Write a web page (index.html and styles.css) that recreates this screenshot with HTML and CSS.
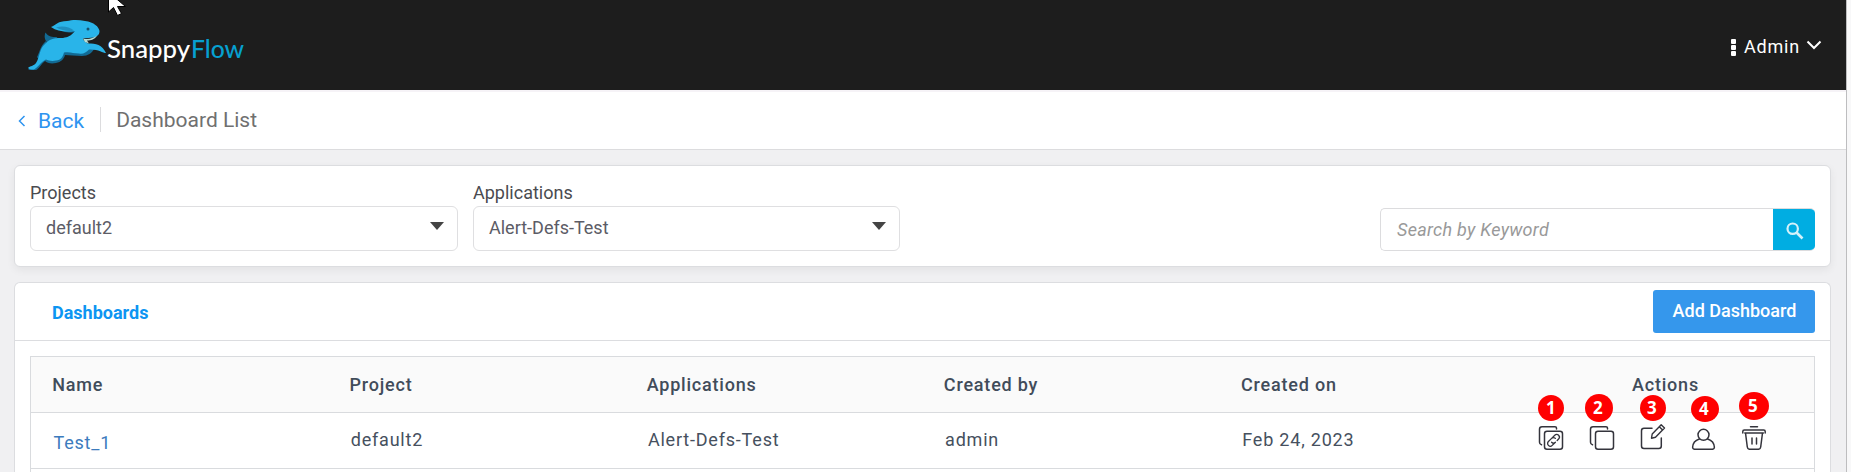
FILE: index.html
```html
<!DOCTYPE html>
<html lang="en">
<head>
<meta charset="utf-8">
<title>Dashboard List</title>
<link rel="stylesheet" href="styles.css">
</head>
<body>
<div class="page">
  <header class="topbar">
    <svg class="logo" width="222" height="56" viewBox="24 16 222 56">
      <path d="M45.500 32.500c3 4 6 5 12 4.500l-3 3-7 3c-3-3-3.500-7-2-10.500z" fill="#126a94"/>
      <path d="M46 41c-6 5-6 11-9 16l2 3 10-10z" fill="#126a94"/>
      <path d="M56 27c6 6 14 6 22 5l2-4-10-3z" fill="#126a94"/>
      <path d="M64 50c8 4 16 3 26-3l4 2c-2 4-6 7-12 7-7 0-12-1-17-1-1 4-4 7-9 8-5 1-9 0-11-2-4 3-6 8-9 9h-8l10-7z" fill="#126a94"/>
      <path d="M51 27c5-2 7-6 16-6 5-1.500 12-1.500 18 0 9 1 14 6 14.500 10 0 4-3 6-6 6.500L83 38.500c0 2 2 3 5 5 8 0 14 1 18 9.500-3 0-8-4-17-3.500-3 3-6 5-10 4-6 0-9-2-15-1-1 4-3 8-8 8-4 1-8 0-10-1-6 3-8 8-12 10-3 0-5-.500-6-1.500 2-2 6-2 8-5 4-6 3-14 9-19 5-6 11-6 18-6 5-1 8-2 12-7-9 1-17 1-24-4z" fill="#29b4e9"/>
      <path d="M56 27.500c6-2 13-1 18 3-6 1.500-12 0-18-3z" fill="#1e8fc0"/>
      <path d="M83 38.500c5 1.300 10 0 14-3-2 4-6 5-10 5l2 3-4-1.500z" fill="#b5dcd5"/>
      <circle cx="88" cy="29" r="1.500" fill="#15516f"/>
      <text class="wordmark" x="107" y="57.500" textLength="83" lengthAdjust="spacingAndGlyphs" fill="#fff">Snappy</text>
      <text class="wordmark" x="191" y="57.500" textLength="53" lengthAdjust="spacingAndGlyphs" fill="#06a0d0">Flow</text>
    </svg>
    <div class="account">
      <span class="dots"><i></i><i></i><i></i></span>
      <span>Admin</span>
      <svg class="chevron" width="16" height="10" viewBox="0 0 16 10"><path d="M1.500 1.500 8 8l6.500-6.500" fill="none" stroke="#fff" stroke-width="2"/></svg>
    </div>
    <svg class="cursor" width="18" height="16" viewBox="0 0 18 16"><path d="M.5-8v20l5-4.500 4 8 4-2-4-7h8z" fill="#fff" stroke="#000"/></svg>
  </header>
  <nav class="crumbs">
    <a class="back"><svg width="8" height="12" viewBox="0 0 8 12"><path d="M6.500 1 1.500 6l5 5" fill="none" stroke="#2e94f0" stroke-width="1.500"/></svg><span>Back</span></a>
    <h1>Dashboard List</h1>
  </nav>
  <main>
    <section class="card filters">
      <div class="field"><label>Projects</label><div class="select"><span>default2</span><svg width="14" height="8" viewBox="0 0 14 8"><path d="M0 0h14L7 8z" fill="#444"/></svg></div></div>
      <div class="field second"><label>Applications</label><div class="select"><span>Alert-Defs-Test</span><svg width="14" height="8" viewBox="0 0 14 8"><path d="M0 0h14L7 8z" fill="#444"/></svg></div></div>
      <div class="search">
        <span class="placeholder">Search by Keyword</span>
        <span class="go"><svg width="18" height="18" viewBox="0 0 18 18" fill="none" stroke="#d3f1fa"><circle cx="6.700" cy="6.700" r="5.200" stroke-width="2.200"/><path d="m10.500 10.500 6 6" stroke-width="2.600"/></svg></span>
      </div>
    </section>
    <section class="card list">
      <div class="list-head"><h2>Dashboards</h2><button class="add">Add Dashboard</button></div>
      <div class="table">
        <div class="row head"><span>Name</span><span>Project</span><span>Applications</span><span>Created by</span><span>Created on</span><span class="center">Actions</span></div>
        <div class="row body">
          <span class="name">Test_1</span><span>default2</span><span>Alert-Defs-Test</span><span>admin</span><span>Feb 24, 2023</span>
          <div class="actions">
            <svg class="icons" width="232" height="28" viewBox="1537 422 232 28" fill="none" stroke="#34343c" stroke-width="1.500" stroke-linecap="round" stroke-linejoin="round">
              <path d="M1556.500 429v-1q0-1.300-1.500-1.300h-13q-2.500 0-2.500 2.500v13q0 2 2 2.500"/>
              <rect x="1544.500" y="431.200" width="18" height="18" rx="2.500"/>
              <g transform="rotate(-45 1553.500 440.300)"><path d="M1553.500 443h-4.500a2.700 2.700 0 0 1 0-5.400h4.500a2.700 2.700 0 0 1 2.700 2.700M1553.500 437.600h4.500a2.700 2.700 0 0 1 0 5.400h-2M1550.800 440.300a2.700 2.700 0 0 0 2.700 2.700" stroke-width="1.300"/></g>
              <path d="M1607.500 429v-1q0-1.300-1.500-1.300h-13q-2.500 0-2.500 2.500v13q0 2 2 2.500"/>
              <rect x="1595.500" y="431.200" width="18" height="18" rx="2.500"/>
              <path d="M1652 428.300h-8q-2.500 0-2.500 2.500v15.200q0 2.500 2.500 2.500h14.800q2.500 0 2.500-2.500v-8"/>
              <path d="m1651.500 438.200.7-4.200 9-9.200 3.300 3.200-9 9.200zM1659.300 426.700l3.300 3.200" stroke-width="1.400"/>
              <circle cx="1703.500" cy="434.800" r="5.500"/>
              <path d="M1699.300 439c-4 1.300-6.500 4.500-6.700 8.300q0 2 2.200 2h17.400q2.200 0 2.200-2c-.2-3.800-2.700-7-6.700-8.300"/>
              <path d="M1742.800 433v-1.500q0-1.500 1.500-1.500h19.400q1.500 0 1.500 1.500v1.500M1750.500 426.700h7M1744.800 433h18.600M1745.500 433l1.800 14q.3 2.300 2.500 2.300h8.400q2.200 0 2.500-2.300l1.800-14M1752 438v6M1756.500 438v6"/>
            </svg>
            <b class="pin p1">1</b><b class="pin p2">2</b><b class="pin p3">3</b><b class="pin p4">4</b><b class="pin p5">5</b>
          </div>
        </div>
        <div class="row next"></div>
      </div>
    </section>
  </main>
</div>
</body>
</html>
```
FILE: styles.css
```css
* { box-sizing: border-box; }
body {
  margin: 0;
  height: 472px;
  overflow: hidden;
  background: #f8f8f9;
  font: 18px/20px Roboto, "Noto Sans", sans-serif;
  color: #4a4b50;
}
h1, h2 { margin: 0; }
.page {
  width: 1847px;
  height: 472px;
  overflow: hidden;
  background: #f0f0f2;
  border-right: 1px solid #bdbdbf;
}
.topbar {
  position: relative;
  height: 90px;
  display: flex;
  align-items: flex-start;
  justify-content: space-between;
  padding: 16px 24px 0;
  background: #1d1d1d;
}
.wordmark { font: 500 25px Lato, sans-serif; }
.account {
  display: flex;
  margin-top: 21px;
  color: #fff;
  letter-spacing: .8px;
}
.dots { display: grid; gap: 1px; width: 5px; margin: 2px 8px 0 0; align-content: start; }
.dots i { height: 5px; background: #fff; border-radius: 1px; }
.chevron { margin: 3px 0 0 6px; }
.cursor { position: absolute; left: 108px; top: 0; }
.crumbs {
  height: 60px;
  display: flex;
  align-items: flex-start;
  padding: 15px 18px 0;
  background: #fff;
  border-top: 2px solid #f6f3f7;
  border-bottom: 1px solid #dcdcde;
}
.back {
  display: flex;
  align-items: center;
  gap: 12px;
  height: 28px;
  padding-right: 16px;
  font-size: 21px;
  color: #2e94f0;
}
.crumbs h1 {
  height: 25px;
  padding-left: 15px;
  border-left: 1px solid #dcdcde;
  font-size: 21px;
  font-weight: 400;
  line-height: 26px;
  color: #707070;
}
main { padding: 15px 15px 0 14px; }
.card {
  background: #fff;
  border: 1px solid #dcdde0;
  border-radius: 6px;
}
.filters {
  height: 102px;
  display: flex;
  gap: 15px;
  padding: 17px 15px 0;
  margin-bottom: 15px;
  box-shadow: 0 3px 8px rgba(0, 0, 0, .06);
}
.field { width: 428px; }
.second { width: 427px; }
.field label { display: block; height: 23px; }
.select {
  height: 45px;
  display: flex;
  justify-content: space-between;
  padding: 11px 13px 0 15px;
  border: 1px solid #dfdfe1;
  border-radius: 6px;
  color: #5c5c66;
}
.select svg { margin-top: 4px; }
.search {
  width: 435px;
  height: 43px;
  display: flex;
  justify-content: space-between;
  margin: 25px 0 0 auto;
  border: 1px solid #dcdcde;
  border-right: 0;
  border-radius: 5px;
  overflow: hidden;
}
.placeholder { padding: 11px 0 0 16px; font-style: italic; letter-spacing: .28px; color: #999; }
.go {
  width: 42px;
  display: grid;
  place-items: center;
  padding-top: 3px;
  padding-left: 2px;
  background: #00ade2;
}
.list { height: 260px; border-bottom: 0; }
.list-head {
  height: 58px;
  display: flex;
  justify-content: space-between;
  padding: 7px 15px 0 37px;
  border-bottom: 1px solid #dcdde0;
}
.list-head h2 { margin-top: 13px; font-size: 18px; font-weight: 700; line-height: 20px; color: #0d95f2; }
.add {
  width: 162px;
  height: 43px;
  padding: 0 0 2px 1px;
  border: 0;
  border-radius: 3px;
  background: #3597ec;
  color: #fff;
  font: 500 18px Roboto, sans-serif;
}
.table {
  width: 1785px;
  margin: 15px 0 0 15px;
  border: 1px solid #d9dbde;
}
.row {
  height: 56px;
  display: grid;
  grid-template-columns: repeat(5, 297.2px) 1fr;
  border-bottom: 1px solid #d9dbde;
  letter-spacing: .8px;
  color: #46505e;
}
.row > span { padding: 18px 0 0 21.3px; }
.head { background: #fafafa; font-weight: 500; color: #414c5a; }
.row > .center { padding-left: 0; text-align: center; }
.body > span { padding: 17px 0 0 22.500px; }
.body > .name { padding: 20px 0 0 22.500px; color: #3c7bbd; }
.next { border: 0; }
.actions { position: relative; padding: 9px 0 0 20px; }
.icons { display: block; }
.pin {
  position: absolute;
  display: grid;
  place-items: center;
  width: 26px;
  height: 26px;
  border-radius: 50%;
  background: #f00;
  color: #fff;
  font: 700 17px/20px "Open Sans", sans-serif;
  letter-spacing: 0;
}
.p1 { left: 21px; top: -18px; }
.p2 { left: 68px; top: -19px; width: 28px; height: 28px; padding-right: 2px; }
.p3 { left: 123px; top: -18px; padding-right: 2px; }
.p4 { left: 174px; top: -17px; width: 28px; padding-right: 2px; }
.p5 { left: 222px; top: -21px; width: 30px; height: 28px; padding-right: 2px; }
```
